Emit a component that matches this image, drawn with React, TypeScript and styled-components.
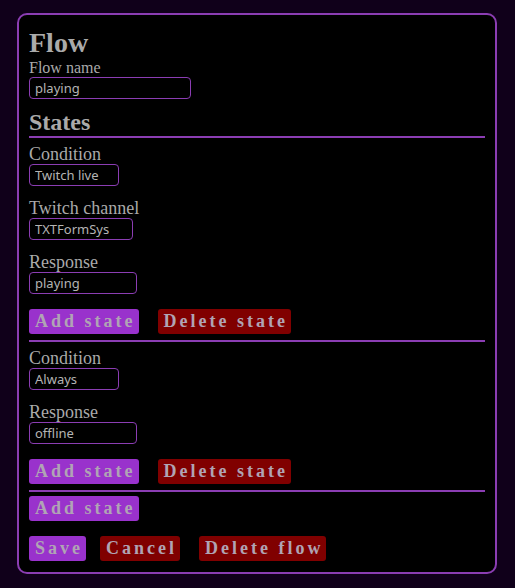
import React from "react";
import styled, { createGlobalStyle } from "styled-components";

const Global = createGlobalStyle`
  html, body { margin: 0; padding: 0; background: #10001a; }
  body { font-family: "Liberation Serif", "Times New Roman", serif; color: #aaa; }
  * { box-sizing: border-box; }
`;

const Page = styled.div`
  padding: 13px 18px 15px 17px;
`;

const Card = styled.div`
  width: 480px;
  background: #000;
  border: 2px solid #8b3db3;
  border-radius: 10px;
  padding: 10px 10px 11px 10px;
`;

const Title = styled.h1`
  margin: 2px 0 0 0;
  font-size: 28px;
  font-weight: bold;
  line-height: 32px;
  color: #aaa;
`;

const SubTitle = styled.h2`
  margin: 10px 0 0 0;
  font-size: 24px;
  font-weight: bold;
  line-height: 27px;
  color: #aaa;
`;

const Rule = styled.div`
  height: 2px;
  background: #8b3db3;
`;

const Label = styled.label<{ $small?: boolean }>`
  display: block;
  font-size: ${(p) => (p.$small ? "16px" : "18px")};
  line-height: ${(p) => (p.$small ? "18px" : "20px")};
  color: #aaa;
`;

const Field = styled.div<{ $first?: boolean }>`
  margin-top: ${(p) => (p.$first ? "0" : "12px")};
`;

const Input = styled.input<{ $w: number }>`
  display: block;
  width: ${(p) => p.$w}px;
  height: 22px;
  background: #000;
  border: 1px solid #8b3db3;
  border-radius: 4px;
  padding: 0 5px;
  font-family: "Noto Sans", "Open Sans", sans-serif;
  font-size: 13px;
  color: #b4b4b4;
  outline: none;
`;

const State = styled.div`
  padding-top: 6px;
`;

const ButtonRow = styled.div`
  display: flex;
  margin-top: 15px;
  margin-bottom: 6px;
`;

const Button = styled.button<{ $danger?: boolean; $ml?: number }>`
  height: 25px;
  margin-left: ${(p) => p.$ml ?? 0}px;
  padding: 0 3px 0 6px;
  border: none;
  border-radius: 3px;
  background: ${(p) => (p.$danger ? "#800000" : "#9932cc")};
  color: #b0a4b4;
  font-family: "Liberation Serif", "Times New Roman", serif;
  font-weight: bold;
  font-size: 18px;
  letter-spacing: 3px;
  line-height: 25px;
  cursor: pointer;
`;

const Footer = styled.div`
  display: flex;
  margin-top: 15px;
`;

const AddRow = styled.div`
  display: flex;
  margin-top: 4px;
`;

type Fld = { label: string; value: string; w: number };

const states: Fld[][] = [
  [
    { label: "Condition", value: "Twitch live", w: 90 },
    { label: "Twitch channel", value: "TXTFormSys", w: 104 },
    { label: "Response", value: "playing", w: 108 },
  ],
  [
    { label: "Condition", value: "Always", w: 90 },
    { label: "Response", value: "offline", w: 108 },
  ],
];

export default function App() {
  return (
    <>
      <Global />
      <Page>
        <Card>
          <Title>Flow</Title>
          <Label $small>Flow name</Label>
          <Input $w={162} defaultValue="playing" />
          <SubTitle>States</SubTitle>
          <Rule />
          {states.map((fields, i) => (
            <React.Fragment key={i}>
              <State>
                {fields.map((f, j) => (
                  <Field key={j} $first={j === 0}>
                    <Label>{f.label}</Label>
                    <Input $w={f.w} defaultValue={f.value} />
                  </Field>
                ))}
                <ButtonRow>
                  <Button>Add state</Button>
                  <Button $danger $ml={19}>
                    Delete state
                  </Button>
                </ButtonRow>
              </State>
              <Rule />
            </React.Fragment>
          ))}
          <AddRow>
            <Button>Add state</Button>
          </AddRow>
          <Footer>
            <Button>Save</Button>
            <Button $danger $ml={14}>
              Cancel
            </Button>
            <Button $danger $ml={19}>
              Delete flow
            </Button>
          </Footer>
        </Card>
      </Page>
    </>
  );
}
